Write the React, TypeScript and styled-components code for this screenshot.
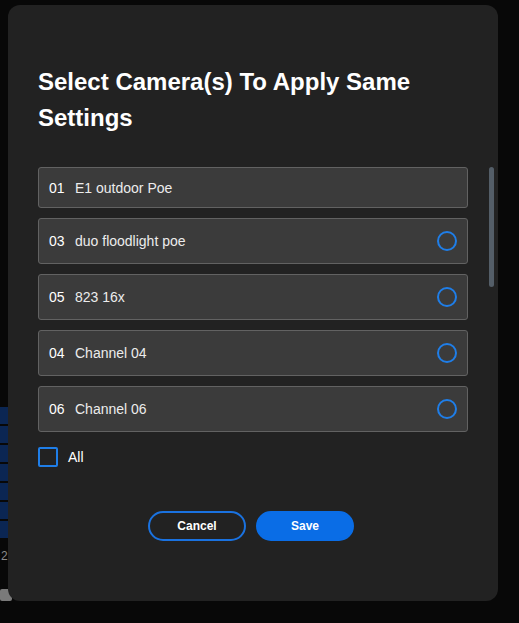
import React from "react";
import styled, { createGlobalStyle } from "styled-components";

const Global = createGlobalStyle`
  html, body { margin: 0; padding: 0; background: #080808; }
  body { font-family: "Liberation Sans", Arial, sans-serif; }
  * { box-sizing: border-box; }
`;

const Page = styled.div`
  position: relative;
  width: 519px;
  height: 623px;
  overflow: hidden;
  background: #080808;
`;

const Behind = styled.div`
  position: absolute;
  left: 0;
  top: 407px;
  width: 12px;
  display: flex;
  flex-direction: column;
  gap: 2px;
`;

const Stripe = styled.div`
  height: 17px;
  background: #0b2653;
`;

const BehindLabel = styled.div`
  margin-top: 9px;
  padding-left: 1px;
  font-size: 12px;
  color: #8a8a8a;
  line-height: 14px;
`;

const BehindChip = styled.div`
  margin-top: 24px;
  height: 12px;
  background: #7a7a7a;
  border-radius: 2px;
`;

const Modal = styled.div`
  position: absolute;
  left: 8px;
  top: 5px;
  width: 490px;
  height: 596px;
  background: #222222;
  border-radius: 12px;
  padding: 59px 30px 0 30px;
  display: flex;
  flex-direction: column;
`;

const Title = styled.h2`
  margin: 0;
  font-size: 24px;
  line-height: 36px;
  font-weight: 700;
  color: #ffffff;
  width: 420px;
`;

const ListWrap = styled.div`
  position: relative;
  margin-top: 31px;
  height: 266px;
`;

const List = styled.div`
  height: 100%;
  width: 430px;
  overflow: hidden;
  display: flex;
  flex-direction: column;
  gap: 10px;
`;

const ScrollThumb = styled.div`
  position: absolute;
  left: 451px;
  top: 0;
  width: 5px;
  height: 120px;
  border-radius: 3px;
  background: #545e68;
`;

const Row = styled.div<{ $tall: boolean }>`
  flex: 0 0 auto;
  height: ${(p) => (p.$tall ? 46 : 41)}px;
  background: #3b3b3b;
  border: 1px solid #626262;
  border-radius: 3px;
  padding: 0 10px;
  display: flex;
  align-items: center;
  font-size: 14px;
  color: #f2f2f2;
`;

const Num = styled.span`
  width: 26px;
  color: #ffffff;
`;

const Name = styled.span`
  flex: 1;
  color: #ececec;
`;

const Radio = styled.span`
  width: 20px;
  height: 20px;
  border-radius: 50%;
  border: 2px solid #1f7ee8;
`;

const AllRow = styled.div`
  margin-top: 14px;
  display: flex;
  align-items: center;
  gap: 10px;
  font-size: 14px;
  line-height: 20px;
  color: #ffffff;
`;

const Box = styled.span`
  width: 20px;
  height: 20px;
  border: 2px solid #1f7ee8;
  border-radius: 2px;
`;

const Buttons = styled.div`
  margin-top: 44px;
  display: flex;
  justify-content: center;
  gap: 10px;
  padding-right: 4px;
`;

const Btn = styled.button<{ $primary?: boolean }>`
  width: 98px;
  height: 30px;
  border-radius: 15px;
  font-family: "Liberation Sans", Arial, sans-serif;
  font-size: 12px;
  font-weight: 700;
  color: #ffffff;
  cursor: pointer;
  border: 2px solid #1a72e0;
  background: ${(p) => (p.$primary ? "#0a6de6" : "transparent")};
  ${(p) => (p.$primary ? "border-color: #0a6de6;" : "")}
`;

const cameras = [
  { num: "01", name: "E1 outdoor Poe", selectable: false },
  { num: "03", name: "duo floodlight poe", selectable: true },
  { num: "05", name: "823 16x", selectable: true },
  { num: "04", name: "Channel 04", selectable: true },
  { num: "06", name: "Channel 06", selectable: true },
  { num: "07", name: "Channel 07", selectable: true },
  { num: "08", name: "Channel 08", selectable: true },
  { num: "09", name: "Channel 09", selectable: true },
];

export default function App() {
  return (
    <Page>
      <Global />
      <Behind>
        {Array.from({ length: 7 }).map((_, i) => (
          <Stripe key={i} />
        ))}
        <BehindLabel>2</BehindLabel>
        <BehindChip />
      </Behind>
      <Modal>
        <Title>Select Camera(s) To Apply Same Settings</Title>
        <ListWrap>
          <List>
            {cameras.map((c) => (
              <Row key={c.num} $tall={c.selectable}>
                <Num>{c.num}</Num>
                <Name>{c.name}</Name>
                {c.selectable && <Radio />}
              </Row>
            ))}
          </List>
          <ScrollThumb />
        </ListWrap>
        <AllRow>
          <Box />
          <span>All</span>
        </AllRow>
        <Buttons>
          <Btn>Cancel</Btn>
          <Btn $primary>Save</Btn>
        </Buttons>
      </Modal>
    </Page>
  );
}
